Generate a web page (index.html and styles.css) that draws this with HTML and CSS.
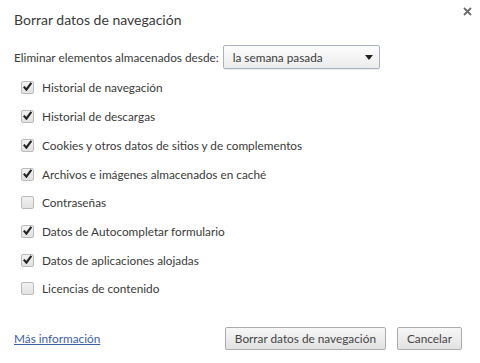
FILE: index.html
```html
<!DOCTYPE html>
<html>
  <head>
    <meta charset="utf-8" />
    <title>Borrar datos de navegación</title>
    <link rel="stylesheet" href="styles.css">
  </head>
  <body>
    <div class="dialog">
      <div class="dialog-header">
        <div class="dialog-title">Borrar datos de navegación</div>
        <div class="close">
          <svg width="9" height="9" viewBox="0 0 9 9">
            <path d="M1 1 L8 8 M8 1 L1 8" stroke="#6b6b6b" stroke-width="1.8"/>
          </svg>
        </div>
      </div>

      <div class="period">
        <span class="period-label">Eliminar elementos almacenados desde:</span>
        <div class="select">
          <span>la semana pasada</span>
          <svg width="8" height="5" viewBox="0 0 8 5">
            <path d="M0 0 L8 0 L4 5 Z" fill="#222"/>
          </svg>
        </div>
      </div>

      <div class="options">
        <div class="option"><span class="check on"></span>Historial de navegación</div>
        <div class="option"><span class="check on"></span>Historial de descargas</div>
        <div class="option"><span class="check on"></span>Cookies y otros datos de sitios y de complementos</div>
        <div class="option"><span class="check on"></span>Archivos e imágenes almacenados en caché</div>
        <div class="option"><span class="check"></span>Contraseñas</div>
        <div class="option"><span class="check on"></span>Datos de Autocompletar formulario</div>
        <div class="option"><span class="check on"></span>Datos de aplicaciones alojadas</div>
        <div class="option"><span class="check"></span>Licencias de contenido</div>
      </div>

      <div class="dialog-footer">
        <a class="more" href="#">Más información</a>
        <div class="buttons">
          <div class="button">Borrar datos de navegación</div>
          <div class="button">Cancelar</div>
        </div>
      </div>
    </div>
  </body>
</html>
```

FILE: styles.css
```css
body {
    font-family: Lato, "Open Sans", sans-serif;
    font-size: 11.8px;
    color: #3a3a3a;
    background: #fff;
    margin: 0;
}
.dialog {
    padding: 0 18px 0 14px;
}
.dialog-header {
    display: flex;
    justify-content: space-between;
    align-items: flex-start;
    height: 45px;
}
.dialog-title {
    font-size: 14px;
    margin-top: 11px;
}
.close {
    margin-top: 7px;
    margin-right: -10px;
}
.close svg {
    display: block;
}
.period {
    display: flex;
    align-items: center;
    height: 24px;
}
.period-label {
    margin-right: 4px;
}
.select {
    display: flex;
    align-items: center;
    justify-content: space-between;
    box-sizing: border-box;
    width: 157px;
    height: 24px;
    padding: 0 6px 0 9px;
    border: 1px solid #aab3c4;
    border-radius: 2px;
    background: linear-gradient(#fdfdfd, #ececec);
    box-shadow: 0 1px 1px rgba(0, 0, 0, 0.08);
}
.options {
    margin-top: 4.6px;
    padding-left: 7px;
}
.option {
    display: flex;
    align-items: center;
    height: 28.7px;
}
.check {
    box-sizing: border-box;
    width: 13px;
    height: 13px;
    margin-right: 8px;
    border: 1px solid #bbb;
    border-radius: 2px;
    background: linear-gradient(#f2f2f2, #e1e1e1);
    position: relative;
}
.check.on::after {
    content: "";
    position: absolute;
    left: 1px;
    top: 0px;
    width: 9px;
    height: 9px;
    background: no-repeat center / 9px 9px url("data:image/svg+xml;utf8,<svg xmlns='http://www.w3.org/2000/svg' viewBox='0 0 9 9'><path d='M0.8 4.6 L3.4 7.6 L8.4 0.8' fill='none' stroke='%23222' stroke-width='2.2'/></svg>");
}
.dialog-footer {
    display: flex;
    justify-content: space-between;
    align-items: center;
    margin-top: 24px;
}
.more {
    color: #3b5ea7;
    text-decoration: underline;
}
.buttons {
    display: flex;
    gap: 11px;
}
.button {
    box-sizing: border-box;
    height: 23px;
    line-height: 21px;
    padding: 0 9px;
    border: 1px solid #acacac;
    border-radius: 2px;
    background: linear-gradient(#f7f7f7, #e2e2e2);
    color: #444;
    box-shadow: 0 1px 1px rgba(0, 0, 0, 0.08);
}
```
